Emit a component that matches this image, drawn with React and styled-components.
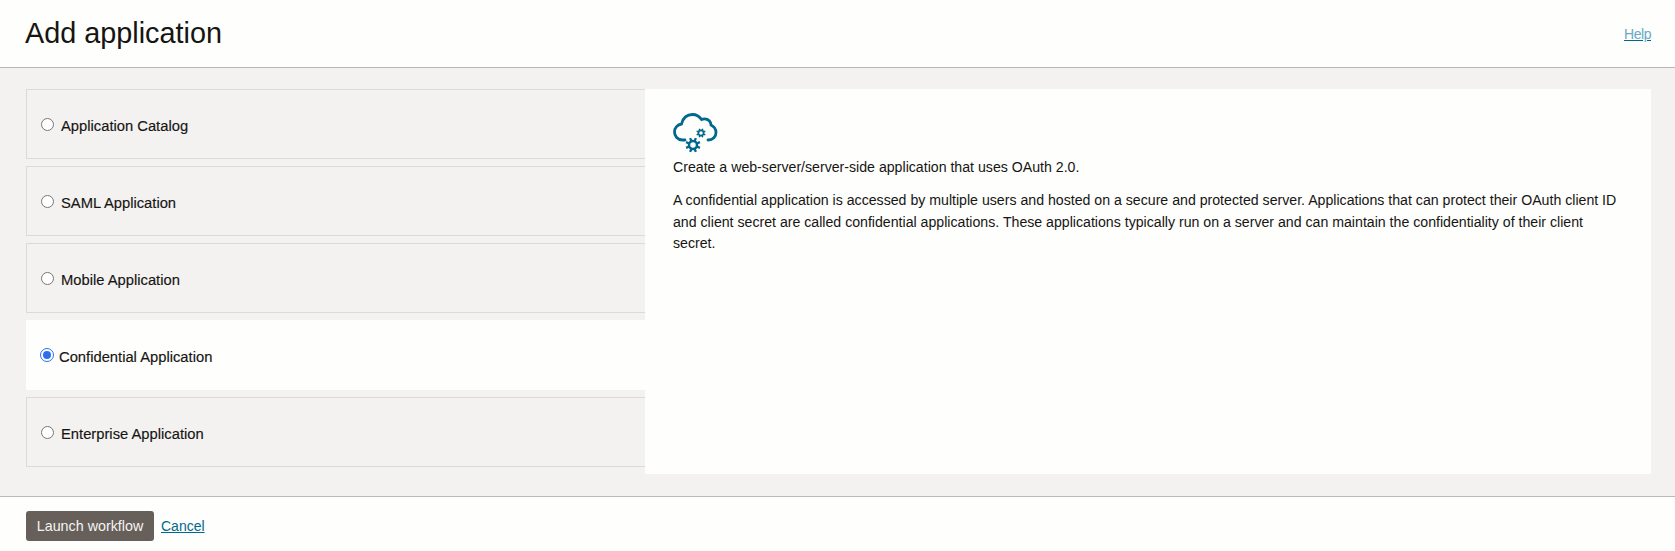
import React from 'react';
import styled, { createGlobalStyle } from 'styled-components';

const GlobalStyle = createGlobalStyle`
  html, body {
    margin: 0;
    padding: 0;
    background: #fefefc;
  }
  body {
    font-family: "Liberation Sans", Arial, sans-serif;
    color: #161513;
  }
`;

const Page = styled.div`
  width: 1675px;
  height: 551px;
  display: flex;
  flex-direction: column;
  overflow: hidden;
`;

const Header = styled.header`
  height: 67px;
  flex: none;
  box-sizing: content-box;
  display: flex;
  align-items: center;
  justify-content: space-between;
  padding: 0 24px 0 25px;
  border-bottom: 1px solid #bcb6b1;
`;

const Title = styled.h1`
  margin: 0 0 2px;
  font-size: 28.8px;
  font-weight: 400;
  line-height: 32px;
`;

const HelpLink = styled.a`
  font-size: 14px;
  letter-spacing: -0.45px;
  color: #6aa8c6;
  text-decoration: underline;
  text-decoration-color: #00688c;
`;

const Body = styled.main`
  flex: 1;
  display: flex;
  align-items: flex-start;
  padding: 21px 24px 0 26px;
  background: #f3f2f1;
`;

const OptionList = styled.div`
  width: 619px;
  flex: none;
  display: flex;
  flex-direction: column;
  gap: 7px;
`;

const Option = styled.label`
  height: 70px;
  box-sizing: border-box;
  display: flex;
  align-items: center;
  gap: ${(p) => (p.$selected ? '5px' : '7px')};
  padding-left: 14px;
  background: ${(p) => (p.$selected ? '#fefefc' : 'transparent')};
  border: ${(p) => (p.$selected ? 'none' : '1px solid #dcdad8')};
  border-right: none;
`;

const OptionName = styled.span`
  padding-top: 3px;
  font-size: 14.75px;
  -webkit-text-stroke: 0.15px #161513;
`;

const Radio = styled.span`
  width: ${(p) => (p.$selected ? '14px' : '13px')};
  height: ${(p) => (p.$selected ? '14px' : '13px')};
  flex: none;
  border-radius: 50%;
  box-sizing: border-box;
  background: #fff;
  border: 1px solid ${(p) => (p.$selected ? '#2f6fed' : '#7a7672')};
  display: flex;
  align-items: center;
  justify-content: center;
  &::after {
    content: '';
    display: ${(p) => (p.$selected ? 'block' : 'none')};
    width: 8px;
    height: 8px;
    border-radius: 50%;
    background: #2f6fed;
  }
`;

const Details = styled.section`
  flex: 1;
  height: 385px;
  box-sizing: border-box;
  padding: 23px 24px 0 28px;
  background: #fefefc;
  font-size: 14.15px;
  line-height: 21.4px;
`;

const IconWrap = styled.div`
  height: 45px;
`;

const Paragraph = styled.p`
  margin: 0 0 12px;
`;

const Footer = styled.footer`
  height: 55px;
  flex: none;
  box-sizing: border-box;
  display: flex;
  align-items: center;
  gap: 7px;
  padding: 4px 26px 0;
  border-top: 1px solid #bcbab8;
`;

const PrimaryButton = styled.button`
  width: 128px;
  height: 30px;
  padding: 0;
  border: none;
  border-radius: 3px;
  background: #665f5a;
  color: #f5f4f2;
  font-family: inherit;
  font-size: 14.3px;
`;

const CancelLink = styled.a`
  font-size: 14px;
  color: #00688c;
  text-decoration: underline;
`;

const options = [
  'Application Catalog',
  'SAML Application',
  'Mobile Application',
  'Confidential Application',
  'Enterprise Application',
];

const Gear = ({ cx, cy, r, outer, width }) => {
  const teeth = [];
  for (let i = 0; i < 8; i += 1) {
    const a = (i * Math.PI) / 4 + Math.PI / 8;
    teeth.push(
      <line
        key={i}
        x1={cx + Math.cos(a) * r}
        y1={cy + Math.sin(a) * r}
        x2={cx + Math.cos(a) * outer}
        y2={cy + Math.sin(a) * outer}
        strokeWidth={width}
      />,
    );
  }
  return (
    <g stroke="#00688c" fill="none">
      {teeth}
      <circle cx={cx} cy={cy} r={r} strokeWidth={r * 0.62} />
    </g>
  );
};

const CloudIcon = () => (
  <svg width="46" height="42" viewBox="0 -1 46 42">
    <path
      d="M12 27 H9.5 C4.5 27 1.5 23 1.5 19 C1.5 15 4.5 11.5 8.5 11 C10 5 14 1.5 19.5 1.5 C23.5 1.5 26.5 3.5 28.5 6.5 C29.5 6 30.5 5.9 31.5 5.9 C35.5 5.9 38 9 38 12 C41 13.5 43 16 43 19.5 C43 23.5 40 27 35 27"
      fill="none"
      stroke="#00688c"
      strokeWidth="2.8"
      strokeLinecap="round"
    />
    <Gear cx={20} cy={32} r={4} outer={7.5} width={2.3} />
    <Gear cx={28} cy={20} r={2.6} outer={4.7} width={1.4} />
  </svg>
);

export default function App() {
  return (
    <Page>
      <GlobalStyle />
      <Header>
        <Title>Add application</Title>
        <HelpLink>Help</HelpLink>
      </Header>
      <Body>
        <OptionList>
          {options.map((name) => {
            const selected = name === 'Confidential Application';
            return (
              <Option key={name} $selected={selected}>
                <Radio $selected={selected} />
                <OptionName>{name}</OptionName>
              </Option>
            );
          })}
        </OptionList>
        <Details>
          <IconWrap>
            <CloudIcon />
          </IconWrap>
          <Paragraph>Create a web-server/server-side application that uses OAuth 2.0.</Paragraph>
          <Paragraph>
            A confidential application is accessed by multiple users and hosted on a secure and protected server. Applications that can protect their OAuth client ID
            and client secret are called confidential applications. These applications typically run on a server and can maintain the confidentiality of their client
            secret.
          </Paragraph>
        </Details>
      </Body>
      <Footer>
        <PrimaryButton>Launch workflow</PrimaryButton>
        <CancelLink>Cancel</CancelLink>
      </Footer>
    </Page>
  );
}
